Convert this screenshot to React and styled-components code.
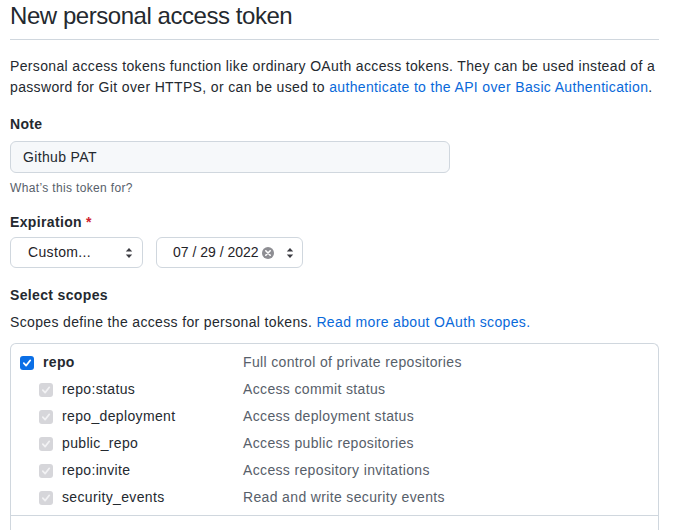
import React from "react";
import styled, { createGlobalStyle } from "styled-components";

const GlobalStyle = createGlobalStyle`
  html, body {
    margin: 0;
    padding: 0;
    overflow: hidden;
    background: #fff;
  }
  body {
    font-family: "Liberation Sans", Arial, sans-serif;
    font-size: 14px;
    line-height: 1.5;
    letter-spacing: 0.35px;
    color: #24292f;
  }
`;

const Page = styled.div`
  width: 649px;
  padding: 0 10px;
`;

const Header = styled.div`
  padding: 1px 0 8px;
  border-bottom: 1px solid #d0d7de;
`;

const Title = styled.h1`
  margin: 0;
  font-size: 24px;
  font-weight: 400;
  line-height: 30px;
  letter-spacing: -0.45px;
`;

const Intro = styled.p`
  margin: 16px 0 16px;
  line-height: 21px;
`;

const Link = styled.a`
  color: #0969da;
  text-decoration: none;
`;

const FormGroup = styled.div`
  margin-bottom: 15px;
`;

const Label = styled.label`
  display: block;
  font-weight: 600;
  line-height: 21px;
  margin-bottom: ${(p) => (p.$tight ? 4 : 6)}px;

  .required {
    color: #cf222e;
    margin-left: 4px;
  }
`;

const TextInput = styled.div`
  width: 414px;
  height: 30px;
  padding: 0 12px;
  box-sizing: content-box;
  display: flex;
  align-items: center;
  background: #f6f8fa;
  border: 1px solid #d0d7de;
  border-radius: 6px;
  font-size: 14px;
`;

const Note = styled.p`
  margin: 6px 0 0;
  font-size: 12px;
  line-height: 18px;
  color: #57606a;
`;

const Controls = styled.div`
  display: flex;
  gap: 13px;
`;

const SelectBox = styled.div`
  box-sizing: border-box;
  width: ${(p) => p.$width}px;
  height: 31px;
  padding: ${(p) => p.$pad};
  display: flex;
  align-items: center;
  border: 1px solid #d0d7de;
  border-radius: 6px;
  background: #fff;
  font-size: 14px;
  color: #1f2328;
`;

const SelectText = styled.span`
  flex: 1;
  white-space: nowrap;
  letter-spacing: ${(p) => (p.$tight ? "0" : "0.35px")};
`;

const ClearIcon = styled.span`
  display: flex;
  margin-right: 12px;
`;

const Section = styled.div`
  margin-top: 17px;
`;

const SectionTitle = styled.h3`
  margin: 0 0 6px;
  font-size: 14px;
  font-weight: 600;
  line-height: 21px;
`;

const SectionText = styled.p`
  margin: 0 0 10px;
  line-height: 21px;
`;

const ScopeBox = styled.div`
  border: 1px solid #d0d7de;
  border-radius: 6px;
  border-bottom: none;
`;

const ScopeGroup = styled.div`
  padding: ${(p) => (p.$last ? "7px 0 4px" : "5px 0 4px")};
  border-bottom: 1px solid #d0d7de;
`;

const ScopeRow = styled.div`
  display: grid;
  grid-template-columns: 232px 1fr;
  height: 27px;
  align-items: center;
`;

const ScopeName = styled.label`
  display: flex;
  align-items: center;
  gap: 9px;
  padding-left: ${(p) => (p.$child ? 28 : 9)}px;
  font-weight: ${(p) => (p.$child ? 400 : 600)};
  color: #24292f;
`;

const ScopeDesc = styled.span`
  color: #57606a;
`;

const Box = styled.span`
  width: 14px;
  height: 14px;
  box-sizing: border-box;
  border-radius: 3px;
  display: flex;
  align-items: center;
  justify-content: center;
  flex-shrink: 0;
  background: ${(p) =>
    p.$state === "checked" ? "#0b6fe6" : p.$state === "disabled" ? "#d6d6da" : "#fff"};
  border: ${(p) => (p.$state === "empty" ? "1px solid #8e8e93" : "none")};
  border-top-color: ${(p) => (p.$state === "empty" ? "#6e6e73" : "transparent")};
`;

const Stepper = () => (
  <svg width="8" height="12" viewBox="0 0 8 12">
    <path d="M4 1 L7.2 4.6 H0.8 Z" fill="#3c3c43" />
    <path d="M4 11 L7.2 7.4 H0.8 Z" fill="#3c3c43" />
  </svg>
);

const Clear = () => (
  <svg width="12" height="12" viewBox="0 0 12 12">
    <circle cx="6" cy="6" r="6" fill="#8e8e93" />
    <path d="M3.8 3.8 L8.2 8.2 M8.2 3.8 L3.8 8.2" stroke="#fff" strokeWidth="1.6" strokeLinecap="round" />
  </svg>
);

const Checkbox = ({ state }) => (
  <Box $state={state}>
    {state !== "empty" && (
      <svg width="10" height="10" viewBox="0 0 10 10">
        <path
          d="M1.8 5.2 L4.1 7.6 L8.3 2.3"
          fill="none"
          stroke={state === "checked" ? "#fff" : "#f2f2f4"}
          strokeWidth="1.7"
          strokeLinecap="round"
          strokeLinejoin="round"
        />
      </svg>
    )}
  </Box>
);

const repoScopes = [
  ["repo:status", "Access commit status"],
  ["repo_deployment", "Access deployment status"],
  ["public_repo", "Access public repositories"],
  ["repo:invite", "Access repository invitations"],
  ["security_events", "Read and write security events"],
];

export default function App() {
  return (
    <Page>
      <GlobalStyle />
      <Header>
        <Title>New personal access token</Title>
      </Header>
      <Intro>
        Personal access tokens function like ordinary OAuth access tokens. They can be used
        instead of a password for Git over HTTPS, or can be used to{" "}
        <Link href="#">authenticate to the API over Basic Authentication</Link>.
      </Intro>

      <FormGroup>
        <Label>Note</Label>
        <TextInput>Github PAT</TextInput>
        <Note>What’s this token for?</Note>
      </FormGroup>

      <FormGroup>
        <Label $tight>
          Expiration<span className="required">*</span>
        </Label>
        <Controls>
          <SelectBox $width={133} $pad="0 9px 0 17px">
            <SelectText>Custom...</SelectText>
            <Stepper />
          </SelectBox>
          <SelectBox $width={147} $pad="0 8px 0 16px">
            <SelectText $tight>07 / 29 / 2022</SelectText>
            <ClearIcon>
              <Clear />
            </ClearIcon>
            <Stepper />
          </SelectBox>
        </Controls>
      </FormGroup>

      <Section>
        <SectionTitle>Select scopes</SectionTitle>
        <SectionText>
          Scopes define the access for personal tokens.{" "}
          <Link href="#">Read more about OAuth scopes.</Link>
        </SectionText>
        <ScopeBox>
          <ScopeGroup>
            <ScopeRow>
              <ScopeName>
                <Checkbox state="checked" />
                repo
              </ScopeName>
              <ScopeDesc>Full control of private repositories</ScopeDesc>
            </ScopeRow>
            {repoScopes.map(([name, desc]) => (
              <ScopeRow key={name}>
                <ScopeName $child>
                  <Checkbox state="disabled" />
                  {name}
                </ScopeName>
                <ScopeDesc>{desc}</ScopeDesc>
              </ScopeRow>
            ))}
          </ScopeGroup>
          <ScopeGroup $last>
            <ScopeRow>
              <ScopeName>
                <Checkbox state="empty" />
                workflow
              </ScopeName>
              <ScopeDesc>Update GitHub Action workflows</ScopeDesc>
            </ScopeRow>
          </ScopeGroup>
        </ScopeBox>
      </Section>
    </Page>
  );
}
